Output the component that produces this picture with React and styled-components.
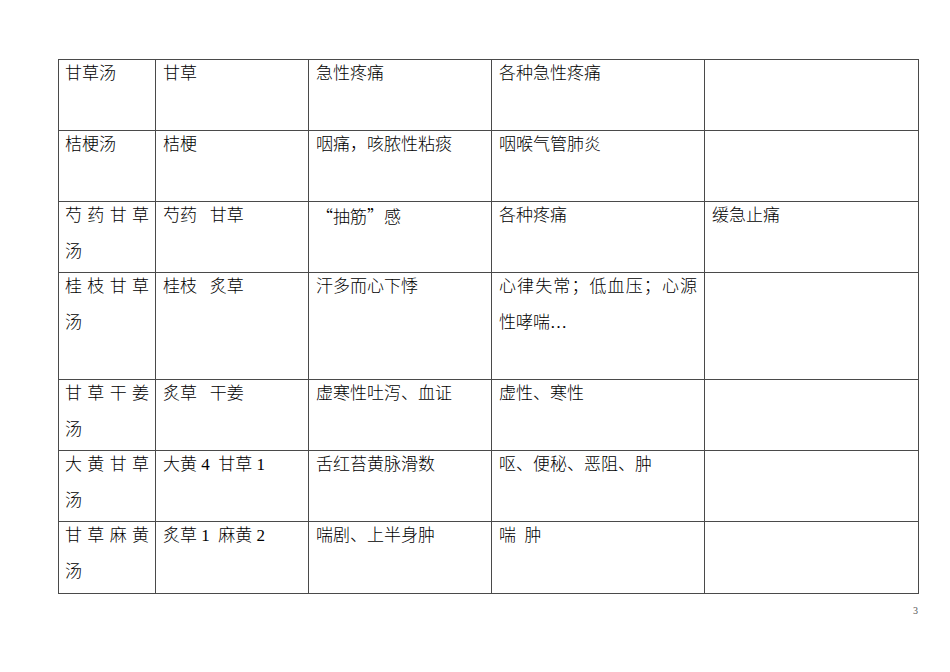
import React from 'react';
import styled, { createGlobalStyle } from 'styled-components';

const GlobalStyle = createGlobalStyle`
  html, body {
    margin: 0;
    padding: 0;
    background: #ffffff;
  }
`;

const Page = styled.div`
  width: 950px;
  height: 672px;
  box-sizing: border-box;
  padding: 59px 32px 0 58px;
  background: #ffffff;
  font-family: 'Liberation Serif', 'Noto Sans CJK SC', serif;
  color: #000000;
`;

const Table = styled.table`
  width: 860px;
  table-layout: fixed;
  border-collapse: collapse;
  border: 1px solid #222222;
`;

const Row = styled.tr`
  height: ${props => props.height}px;
`;

const Cell = styled.td`
  border: 1px solid #4a4a4a;
  vertical-align: top;
  padding: 0 ${props => props.pad}px 0 ${props => props.pad}px;
  font-size: 17px;
  font-weight: 300;
  line-height: 36px;
  text-align: justify;
  white-space: pre-wrap;
  overflow: hidden;
`;

const CellText = styled.div`
  margin-top: -4px;
`;

const Quote = styled.span`
  font-family: 'Noto Sans CJK SC', sans-serif;
`;

const Footer = styled.div`
  width: 860px;
  margin-top: 11px;
  text-align: right;
  font-size: 10px;
  line-height: 12px;
  color: #555555;
`;

const rows = [
  { h: 71, cells: ['甘草汤', '甘草', '急性疼痛', '各种急性疼痛', ''] },
  { h: 71, cells: ['桔梗汤', '桔梗', '咽痛，咳脓性粘痰', '咽喉气管肺炎', ''] },
  { h: 71, cells: ['芍药甘草汤', '芍药   甘草', 'quote', '各种疼痛', '缓急止痛'] },
  { h: 107, cells: ['桂枝甘草汤', '桂枝   炙草', '汗多而心下悸', '心律失常；低血压；心源性哮喘…', ''] },
  { h: 71, cells: ['甘草干姜汤', '炙草   干姜', '虚寒性吐泻、血证', '虚性、寒性', ''] },
  { h: 71, cells: ['大黄甘草汤', '大黄 4  甘草 1', '舌红苔黄脉滑数', '呕、便秘、恶阻、肿', ''] },
  { h: 72, cells: ['甘草麻黄汤', '炙草 1  麻黄 2', '喘剧、上半身肿', '喘  肿', ''] },
];

const widths = [97, 153, 183, 213, 214];

function renderContent(text) {
  if (text === 'quote') {
    return (
      <>
        <Quote>“抽筋”</Quote>感
      </>
    );
  }
  return text;
}

export default function App() {
  return (
    <Page>
      <GlobalStyle />
      <Table>
        <colgroup>
          {widths.map((w, i) => (
            <col key={i} style={{ width: w }} />
          ))}
        </colgroup>
        <tbody>
          {rows.map((row, r) => (
            <Row key={r} height={row.h}>
              {row.cells.map((c, i) => (
                <Cell key={i} pad={i === 0 ? 6 : 7}>
                  <CellText>{renderContent(c)}</CellText>
                </Cell>
              ))}
            </Row>
          ))}
        </tbody>
      </Table>
      <Footer>3</Footer>
    </Page>
  );
}
